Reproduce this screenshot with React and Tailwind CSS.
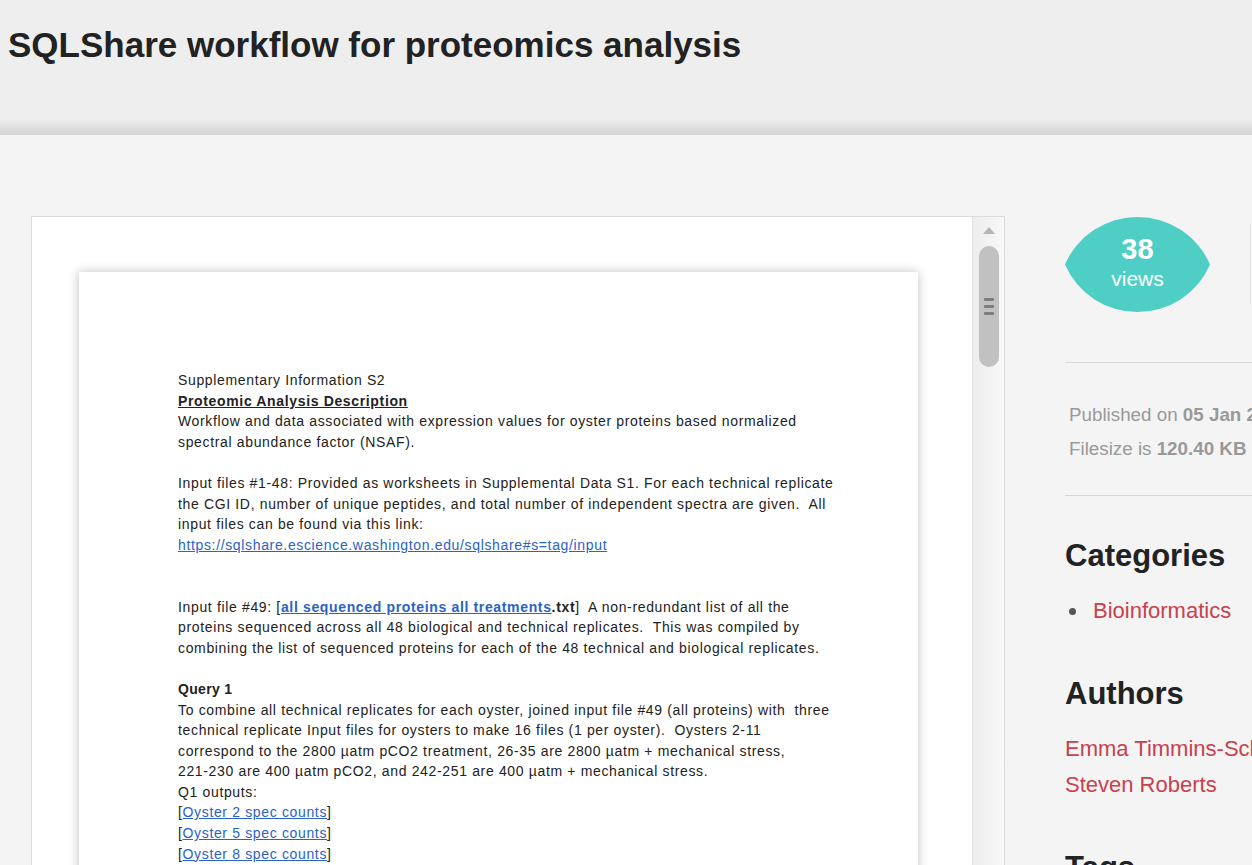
import React from 'react';

const Doc = () => (
  <div className="text-[14px] leading-[20.6px] tracking-[0.65px] text-[#222]">
    <p>Supplementary Information S2</p>
    <p className="font-bold underline">Proteomic Analysis Description</p>
    <p>
      Workflow and data associated with expression values for oyster proteins based normalized
      <br />
      spectral abundance factor (NSAF).
    </p>
    <p className="h-[20.6px]" />
    <p>
      Input files #1-48: Provided as worksheets in Supplemental Data S1. For each technical replicate
      <br />
      the CGI ID, number of unique peptides, and total number of independent spectra are given.&nbsp; All
      <br />
      input files can be found via this link:
    </p>
    <p>
      <a className="text-[#2a62c9] underline">https://sqlshare.escience.washington.edu/sqlshare#s=tag/input</a>
    </p>
    <p className="h-[41.2px]" />
    <p>
      Input file #49: [
      <a className="font-bold text-[#2a62c9] underline">all sequenced proteins all treatments</a>
      <span className="font-bold">.txt</span>]&nbsp; A non-redundant list of all the
      <br />
      proteins sequenced across all 48 biological and technical replicates.&nbsp; This was compiled by
      <br />
      combining the list of sequenced proteins for each of the 48 technical and biological replicates.
    </p>
    <p className="h-[20.6px]" />
    <p className="font-bold tracking-[0.3px]">Query 1</p>
    <p>
      To combine all technical replicates for each oyster, joined input file #49 (all proteins) with&nbsp; three
      <br />
      technical replicate Input files for oysters to make 16 files (1 per oyster).&nbsp; Oysters 2-11
      <br />
      correspond to the 2800 µatm pCO2 treatment, 26-35 are 2800 µatm + mechanical stress,
      <br />
      221-230 are 400 µatm pCO2, and 242-251 are 400 µatm + mechanical stress.
    </p>
    <p>Q1 outputs:</p>
    {['Oyster 2 spec counts', 'Oyster 5 spec counts', 'Oyster 8 spec counts'].map((t) => (
      <p key={t}>
        [<a className="text-[#2a62c9] underline">{t}</a>]
      </p>
    ))}
  </div>
);

const App = () => {
  return (
    <div className="h-[865px] overflow-hidden bg-[#f4f4f4] font-['Liberation_Sans',Arial,sans-serif]">
      <header className="relative h-[135px] bg-[#eeeeee]">
        <h1 className="pl-[8px] pt-[24px] text-[35px] font-bold leading-[42px] text-[#222]">
          SQLShare workflow for proteomics analysis
        </h1>
        <div className="absolute bottom-0 left-0 right-0 h-[16px] bg-gradient-to-b from-[#eeeeee] to-[#d4d4d4]" />
      </header>

      <div className="flex pl-[31px] pt-[81px]">
        {/* document viewer */}
        <div className="flex h-[700px] w-[974px] shrink-0 border border-[#dcdcdc] bg-white">
          <div className="flex-1 pl-[47px] pt-[55px]">
            <div className="h-[700px] w-[839px] bg-white pl-[99px] pt-[98px] shadow-[0_0_10px_rgba(0,0,0,0.25)]">
              <Doc />
            </div>
          </div>
          <div className="flex w-[32px] flex-col items-center border-l border-[#e2e2e2] bg-gradient-to-r from-[#ededed] to-[#f8f8f8]">
            <div className="mt-[10px] h-0 w-0 border-x-[6px] border-b-[7px] border-x-transparent border-b-[#b5b5b5]" />
            <div className="mt-[12px] flex h-[121px] w-[20px] flex-col items-center justify-center gap-[4px] rounded-[10px] bg-[#c1c1c1]">
              <span className="h-[3px] w-[10px] rounded-[1px] bg-[#7d7d7d]" />
              <span className="h-[3px] w-[10px] rounded-[1px] bg-[#7d7d7d]" />
              <span className="h-[3px] w-[10px] rounded-[1px] bg-[#7d7d7d]" />
            </div>
          </div>
        </div>

        {/* sidebar */}
        <aside className="ml-[60px] w-[300px] shrink-0">
          <div className="flex items-start">
            <div className="relative h-[97px] w-[145px]">
              <svg width="145" height="97" viewBox="0 0 145 97" className="absolute inset-0">
                <path d="M0 48.5 A79 79 0 0 1 145 48.5 A79 79 0 0 1 0 48.5 Z" fill="#4fcec6" />
              </svg>
              <div className="relative flex h-full flex-col items-center pt-[16px] text-white">
                <span className="text-[29px] font-bold leading-[34px]">38</span>
                <span className="text-[21px] leading-[26px]">views</span>
              </div>
            </div>
            <div className="ml-[40px] mt-[8px] h-[80px] w-[1px] bg-[#e4e4e4]" />
          </div>

          <hr className="mt-[49px] border-0 border-t border-[#d6d6d6]" />
          <div className="pl-[4px] pt-[35px] text-[18.8px] leading-[34px] text-[#999] whitespace-nowrap">
            <p>
              Published on <b>05 Jan 2015</b>
            </p>
            <p>
              Filesize is <b>120.40 KB</b>
            </p>
          </div>
          <hr className="mt-[29px] border-0 border-t border-[#d6d6d6]" />

          <h2 className="mt-[42px] text-[31px] font-bold leading-[36px] text-[#222]">Categories</h2>
          <ul className="mt-[22px]">
            <li className="flex items-center text-[22px] leading-[30px] text-[#c8414c]">
              <span className="ml-[4px] mr-[17px] h-[7px] w-[7px] rounded-full bg-[#555]" />
              Bioinformatics
            </li>
          </ul>

          <h2 className="mt-[50px] text-[31px] font-bold leading-[36px] text-[#222]">Authors</h2>
          <div className="mt-[19px] text-[22px] leading-[36px] text-[#c8414c] whitespace-nowrap">
            <p>Emma Timmins-Schiffman</p>
            <p>Steven Roberts</p>
          </div>

          <h2 className="mt-[47px] text-[31px] font-bold leading-[36px] text-[#222]">Tags</h2>
        </aside>
      </div>
    </div>
  );
};

export default App;
